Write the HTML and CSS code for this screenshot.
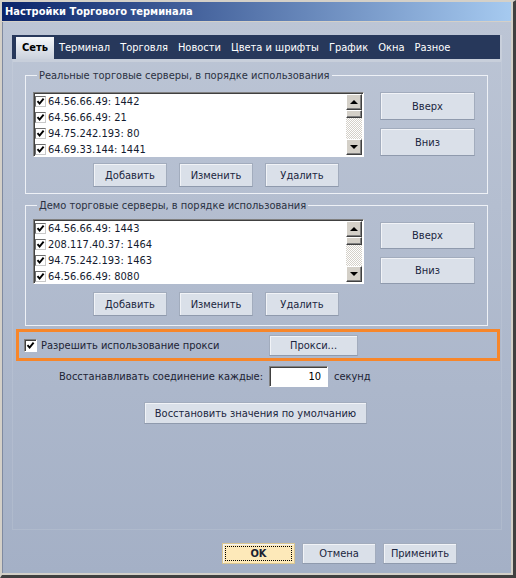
FILE: index.html
```html
<!DOCTYPE html>
<html lang="ru">
<head>
  <meta charset="UTF-8">
  <title>Настройки Торгового терминала</title>
  <link rel="stylesheet" href="styles.css">
</head>
<body>
  <div class="window">
    <div class="frame">
      <!-- Title bar -->
      <div class="title-bar">Настройки Торгового терминала</div>

      <div class="client">
        <div class="tabs">
          <!-- Tab headers -->
          <div class="tab-strip">
            <span class="tab active">Сеть</span>
            <span class="tab">Терминал</span>
            <span class="tab">Торговля</span>
            <span class="tab">Новости</span>
            <span class="tab">Цвета и шрифты</span>
            <span class="tab">График</span>
            <span class="tab">Окна</span>
            <span class="tab">Разное</span>
          </div>

          <div class="panel">
            <!-- Real servers -->
            <fieldset class="group group-real">
              <legend>Реальные торговые серверы, в порядке использования</legend>
              <div class="group-row">
                <div class="listbox">
                  <ul class="items">
                    <li><span class="check"><svg viewBox="0 0 9 9"><path d="M1.5 4.2 L3.6 6.6 L7.6 1.6"/></svg></span>64.56.66.49: 1442</li>
                    <li><span class="check"><svg viewBox="0 0 9 9"><path d="M1.5 4.2 L3.6 6.6 L7.6 1.6"/></svg></span>64.56.66.49: 21</li>
                    <li><span class="check"><svg viewBox="0 0 9 9"><path d="M1.5 4.2 L3.6 6.6 L7.6 1.6"/></svg></span>94.75.242.193: 80</li>
                    <li><span class="check"><svg viewBox="0 0 9 9"><path d="M1.5 4.2 L3.6 6.6 L7.6 1.6"/></svg></span>64.69.33.144: 1441</li>
                  </ul>
                  <div class="scrollbar">
                    <span class="arrow up"></span>
                    <span class="thumb"></span>
                    <span class="track"></span>
                    <span class="arrow down"></span>
                  </div>
                </div>
                <div class="side-buttons">
                  <button class="btn side">Вверх</button>
                  <button class="btn side">Вниз</button>
                </div>
              </div>
              <div class="edit-buttons">
                <button class="btn edit">Добавить</button>
                <button class="btn edit">Изменить</button>
                <button class="btn edit">Удалить</button>
              </div>
            </fieldset>

            <!-- Demo servers -->
            <fieldset class="group group-demo">
              <legend>Демо торговые серверы, в порядке использования</legend>
              <div class="group-row">
                <div class="listbox">
                  <ul class="items">
                    <li><span class="check"><svg viewBox="0 0 9 9"><path d="M1.5 4.2 L3.6 6.6 L7.6 1.6"/></svg></span>64.56.66.49: 1443</li>
                    <li><span class="check"><svg viewBox="0 0 9 9"><path d="M1.5 4.2 L3.6 6.6 L7.6 1.6"/></svg></span>208.117.40.37: 1464</li>
                    <li><span class="check"><svg viewBox="0 0 9 9"><path d="M1.5 4.2 L3.6 6.6 L7.6 1.6"/></svg></span>94.75.242.193: 1463</li>
                    <li><span class="check"><svg viewBox="0 0 9 9"><path d="M1.5 4.2 L3.6 6.6 L7.6 1.6"/></svg></span>64.56.66.49: 8080</li>
                  </ul>
                  <div class="scrollbar">
                    <span class="arrow up"></span>
                    <span class="thumb"></span>
                    <span class="track"></span>
                    <span class="arrow down"></span>
                  </div>
                </div>
                <div class="side-buttons">
                  <button class="btn side">Вверх</button>
                  <button class="btn side">Вниз</button>
                </div>
              </div>
              <div class="edit-buttons">
                <button class="btn edit">Добавить</button>
                <button class="btn edit">Изменить</button>
                <button class="btn edit">Удалить</button>
              </div>
            </fieldset>

            <!-- Proxy -->
            <div class="proxy-row">
              <label class="proxy-label">
                <span class="checkbox"><svg viewBox="0 0 9 9"><path d="M1.5 4.2 L3.6 6.6 L7.6 1.6"/></svg></span>
                Разрешить использование прокси
              </label>
              <button class="btn proxy">Прокси...</button>
            </div>

            <!-- Reconnect interval -->
            <div class="reconnect-row">
              <span class="reconnect-label">Восстанавливать соединение каждые:</span>
              <span class="number-field">10</span>
              <span>секунд</span>
            </div>

            <button class="btn reset">Восстановить значения по умолчанию</button>
          </div>
        </div>

        <!-- Dialog buttons -->
        <div class="dialog-buttons">
          <button class="btn ok">OK</button>
          <button class="btn dialog">Отмена</button>
          <button class="btn dialog">Применить</button>
        </div>
      </div>
    </div>
  </div>
</body>
</html>
```

FILE: styles.css
```css
/* Global */
* {
  box-sizing: border-box;
}

body {
  margin: 0;
  background: #d4d0c8;
  font-family: "DejaVu Sans Condensed", "Liberation Sans", sans-serif;
  font-size: 11px;
  color: #1c2334;
}

/* Window frame */
.window {
  width: 516px;
  height: 578px;
  border-top: 2px solid #d4d0c8;
  border-left: 2px solid #d4d0c8;
  border-right: 3px solid #404040;
  border-bottom: 3px solid #404040;
}

.frame {
  height: 100%;
  display: flex;
  flex-direction: column;
  border-right: 2px solid #d4d0c8;
  border-bottom: 2px solid #d4d0c8;
}

.title-bar {
  height: 20px;
  line-height: 19px;
  padding-left: 3px;
  background: linear-gradient(to right, #0a246a, #a6caf0);
  border-bottom: 1px solid #d4d0c8;
  color: #fff;
  font-weight: bold;
}

.client {
  flex: 1;
  border-left: 1px solid #7f8aa0;
  background: linear-gradient(#bcc5d5, #a4b0c6);
  padding: 13px 0 0 9px;
}

/* Tabs */
.tabs {
  width: 490px;
}

.tab-strip {
  height: 24px;
  display: flex;
  align-items: flex-end;
  padding-left: 4px;
  background: #27385b;
  border-right: 2px solid #c8cfdb;
}

.tab {
  height: 22px;
  line-height: 22px;
  padding: 0 5px;
  color: #fff;
}

.tab.active {
  padding: 0 6px;
  background: linear-gradient(#f5f7fa, #cbd2dd);
  color: #000;
  font-weight: bold;
}

.panel {
  height: 471px;
  border: 1px solid rgba(255, 255, 255, 0.1);
  border-top: 3px solid #c8cfdb;
  display: flex;
  flex-direction: column;
  align-items: flex-start;
}

/* Group boxes */
.group {
  width: 463px;
  margin: 7px 0 0 12px;
  padding: 10px 0 6px 7px;
  border: 1px solid #eef1f6;
}

.group legend {
  margin-left: 4px;
  padding: 0 2px;
  line-height: 13px;
  color: #2a3142;
}

.group-demo {
  margin-top: 5px;
  padding-top: 7px;
  padding-bottom: 9px;
}

.group-row {
  display: flex;
  gap: 16px;
}

.listbox {
  width: 331px;
  height: 65px;
  display: flex;
  background: #fff;
  border: 1px solid;
  border-color: #808080 #fff #fff #808080;
  box-shadow: inset 1px 1px 0 #404040;
}

.items {
  flex: 1;
  margin: 0;
  padding: 0;
  list-style: none;
  overflow: hidden;
}

.items li {
  height: 16px;
  display: flex;
  align-items: center;
  padding-left: 1px;
  color: #141b30;
  white-space: nowrap;
}

.check {
  width: 11px;
  height: 11px;
  margin-right: 2px;
  background: #fff;
  border: 1px solid;
  border-color: #6e6e6e #c8c8c8 #c8c8c8 #6e6e6e;
  display: flex;
}

.check svg,
.checkbox svg {
  width: 9px;
  height: 9px;
  fill: none;
  stroke: #000;
  stroke-width: 1.9;
}

/* Scrollbar */
.scrollbar {
  width: 16px;
  margin: 1px 1px 1px 0;
  display: flex;
  flex-direction: column;
}

.arrow,
.thumb {
  background: #d4d0c8;
  border: 1px solid;
  border-color: #fff #404040 #404040 #fff;
  box-shadow: inset -1px -1px 0 #808080;
}

.arrow {
  height: 16px;
  position: relative;
}

.arrow::after {
  content: "";
  position: absolute;
  left: 3px;
  border-left: 4px solid transparent;
  border-right: 4px solid transparent;
}

.arrow.up::after {
  top: 5px;
  border-bottom: 4px solid #000;
}

.arrow.down::after {
  top: 5px;
  border-top: 4px solid #000;
}

.thumb {
  height: 8px;
}

.track {
  flex: 1;
  background: repeating-conic-gradient(#d4d0c8 0 25%, #fff 0 50%) 0 0 / 2px 2px;
}

/* Buttons */
.btn {
  font: inherit;
  color: #1b2640;
  background: #dae0e9;
  border: 1px solid #a2acbd;
  border-bottom-color: #8f9aad;
  box-shadow: inset 1px 1px 0 #f1f3f7;
  padding: 0;
}

.side-buttons {
  display: flex;
  flex-direction: column;
  gap: 8px;
}

.btn.side {
  width: 95px;
  height: 28px;
}

.group-demo .side-buttons {
  margin-top: 3px;
}

.group-demo .btn.side {
  height: 27px;
}

.edit-buttons {
  display: flex;
  gap: 12px;
  margin: 6px 0 0 60px;
}

.group-demo .edit-buttons {
  margin-top: 8px;
}

.btn.edit {
  width: 74px;
  height: 24px;
}

/* Proxy row */
.proxy-row {
  width: 484px;
  height: 32px;
  margin: 3px 0 0 3px;
  padding-left: 5px;
  border: 3px solid #f7862a;
  display: flex;
  align-items: center;
}

.proxy-label {
  width: 245px;
  display: flex;
  align-items: center;
  gap: 4px;
  color: #1c2334;
}

.checkbox {
  width: 13px;
  height: 13px;
  background: #fff;
  border: 1px solid;
  border-color: #808080 #fff #fff #808080;
  box-shadow: inset 1px 1px 0 #404040;
  display: flex;
  align-items: center;
  justify-content: center;
}

.btn.proxy {
  width: 89px;
  height: 21px;
}

/* Reconnect row */
.reconnect-row {
  margin-top: 5px;
  display: flex;
  align-items: center;
  gap: 6px;
}

.reconnect-label {
  width: 250px;
  text-align: right;
}

.number-field {
  width: 59px;
  height: 21px;
  line-height: 19px;
  padding-right: 6px;
  text-align: right;
  background: #fff;
  border: 1px solid;
  border-color: #808080 #fff #fff #808080;
  box-shadow: inset 1px 1px 0 #404040;
  color: #000;
}

.btn.reset {
  width: 223px;
  height: 22px;
  margin: 15px 0 0 131px;
}

/* Dialog buttons */
.dialog-buttons {
  display: flex;
  gap: 7px;
  margin: 13px 0 0 210px;
}

.btn.ok,
.btn.dialog {
  width: 74px;
  height: 21px;
}

.btn.ok {
  width: 73px;
  background: #fde9b9;
  border-color: #d9c692;
  font-weight: bold;
  color: #1a2030;
  outline: 1px dotted #000;
  outline-offset: -4px;
}
```
